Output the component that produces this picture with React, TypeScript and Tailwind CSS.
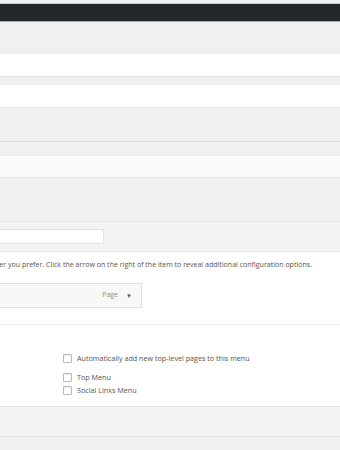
import React from "react";

function Check() {
  return <span className="block w-[9px] h-[9px] border border-[#b4b9be] bg-white rounded-[1px] shrink-0 shadow-[inset_0_1px_1px_rgba(0,0,0,0.08)]" />;
}

export default function App() {
  return (
    <div className="w-[340px] h-[450px] overflow-hidden bg-[#f0f0f0] text-[#555] font-['Open_Sans',sans-serif]">
      <div className="h-[3px] bg-[#f1f1f1]" />
      <div className="h-[1px] bg-[#c8c8c8]" />
      <div className="h-[17px] bg-[#23282d]" />
      <div className="h-[1px] bg-[#a9abad]" />
      <div className="h-[32px] bg-[#f0f0f0]" />
      <div className="h-[22px] bg-white" />
      <div className="h-[1px] bg-[#e3e3e3]" />
      <div className="h-[8px] bg-[#f0f0f0]" />
      <div className="h-[22px] bg-white" />
      <div className="h-[1px] bg-[#e3e3e3]" />
      <div className="h-[33px] bg-[#f0f0f0]" />
      <div className="h-[1px] bg-[#dcdcdc]" />
      <div className="h-[13px] bg-[#f0f0f0]" />
      <div className="h-[1px] bg-[#ececec]" />
      <div className="h-[21px] bg-[#fafafa]" />
      <div className="h-[1px] bg-[#e3e3e3]" />
      <div className="h-[43px] bg-[#f0f0f0]" />
      <div className="h-[1px] bg-[#e3e3e3]" />
      <div className="h-[29px] bg-[#f3f3f3] pt-[7px]">
        <div className="w-[104px] h-[15px] bg-white border border-[#e2e2e2] border-l-0" />
      </div>
      <div className="h-[1px] bg-[#e6e6e6]" />
      <div className="h-[72px] bg-white pt-[7px]">
        <div className="w-[312px] flex justify-end h-[10px] items-center">
          <span className="whitespace-nowrap shrink-0 text-[7.05px] leading-[10px] text-[#555]">
            Drag the items into the order you prefer. Click the arrow on the right of the item to reveal additional configuration options.
          </span>
        </div>
        <div className="mt-[14px] w-[142px] h-[25px] bg-[#f8f8f8] border border-[#dfdfdf] border-l-0 flex items-center justify-end pr-[9px] gap-[8px]">
          <span className="text-[7px] text-[#8a8a8a]">Page</span>
          <span className="text-[6px] text-[#555] leading-none">▼</span>
        </div>
      </div>
      <div className="h-[1px] bg-[#eeeeee]" />
      <div className="h-[81px] bg-white pt-[28px] pl-[63px] flex flex-col">
        <div className="flex items-center gap-[5px] h-[10px]">
          <Check />
          <span className="text-[7.2px] text-[#555] whitespace-nowrap">Automatically add new top-level pages to this menu</span>
        </div>
        <div className="flex items-center gap-[5px] h-[10px] mt-[9px]">
          <Check />
          <span className="text-[7.2px] text-[#555] whitespace-nowrap">Top Menu</span>
        </div>
        <div className="flex items-center gap-[5px] h-[10px] mt-[3px]">
          <Check />
          <span className="text-[7.2px] text-[#555] whitespace-nowrap">Social Links Menu</span>
        </div>
      </div>
      <div className="h-[1px] bg-[#e6e6e6]" />
      <div className="h-[29px] bg-[#f3f3f3]" />
      <div className="h-[1px] bg-[#e2e2e2]" />
      <div className="h-[14px] bg-[#f0f0f0]" />
    </div>
  );
}
